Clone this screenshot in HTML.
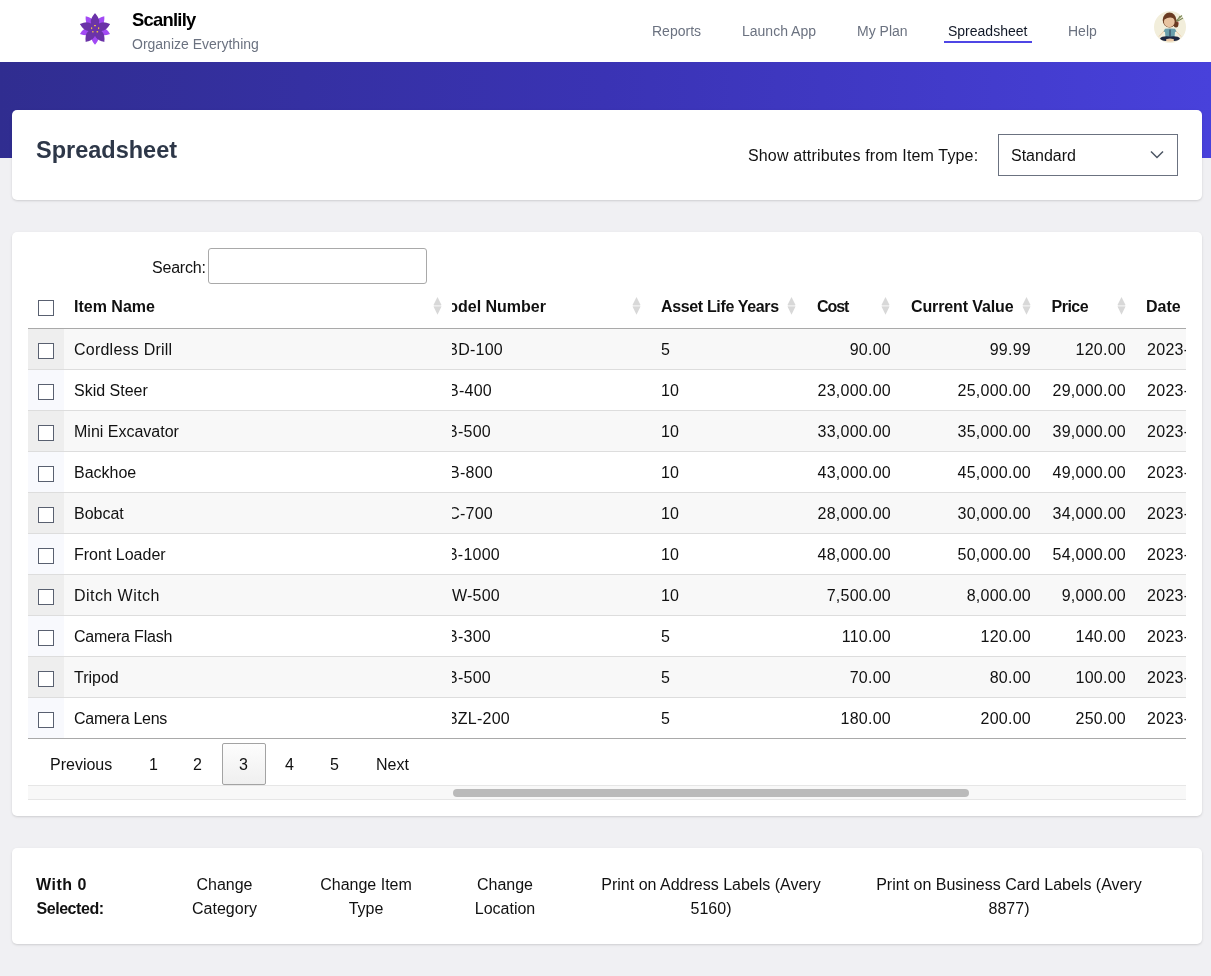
<!DOCTYPE html>
<html><head><meta charset="utf-8"><style>
*{box-sizing:border-box;margin:0;padding:0}
html,body{width:1211px;height:976px;overflow:hidden;background:#f0f0f3;font-family:"Liberation Sans",sans-serif;color:#111}
.a{position:absolute;white-space:nowrap}
.clip{position:absolute;overflow:hidden}
#hdr{position:absolute;left:0;top:0;width:1211px;height:62px;background:#fff}
#band{position:absolute;left:0;top:62px;width:1211px;height:96px;background:linear-gradient(90deg,#302d90 0%,#3a33b4 50%,#4841db 100%)}
.card{position:absolute;left:12px;width:1190px;background:#fff;border-radius:5px;box-shadow:0 1px 3px rgba(0,0,0,.10),0 1px 2px rgba(0,0,0,.06)}
.nav{font-size:14px;color:#6b7280;top:23px}
.th{font-size:16px;font-weight:700;color:#111;top:297.8px}
.cb{position:absolute;width:16px;height:16px;border:1px solid #596070;border-radius:0;background:#fff}
.td{font-size:16px;color:#111;position:absolute}
.num{letter-spacing:.25px}
</style></head><body><div id="root" style="position:absolute;left:0;top:0;width:1211px;height:976px;will-change:transform">
<div id="hdr">
<svg class="a" style="left:78px;top:12px" width="34" height="34" viewBox="78 12 34 34">
<path d="M95.00,29.00Q105.25,27.66 104.29,16.22Q93.11,18.84 95.00,29.00ZM95.00,29.00Q99.44,38.33 110.03,33.88Q104.08,24.06 95.00,29.00ZM95.00,29.00Q87.50,36.11 95.00,44.80Q102.50,36.11 95.00,29.00ZM95.00,29.00Q85.92,24.06 79.97,33.88Q90.56,38.33 95.00,29.00ZM95.00,29.00Q96.89,18.84 85.71,16.22Q84.75,27.66 95.00,29.00Z" fill="#a24af4"/>
<path d="M95.00,29.00Q103.50,21.89 95.00,13.20Q86.50,21.89 95.00,29.00ZM95.00,29.00Q104.39,34.89 110.03,24.12Q99.14,18.72 95.00,29.00ZM95.00,29.00Q92.30,39.75 104.29,41.78Q106.06,29.76 95.00,29.00ZM95.00,29.00Q83.94,29.76 85.71,41.78Q97.70,39.75 95.00,29.00ZM95.00,29.00Q90.86,18.72 79.97,24.12Q85.61,34.89 95.00,29.00Z" fill="#6b33a8"/>
<polygon points="95.00,13.20 98.82,23.74 110.03,24.12 101.18,31.01 104.29,41.78 95.00,35.50 85.71,41.78 88.82,31.01 79.97,24.12 91.18,23.74" fill="#6b33a8"/>
<g fill="#e8b64a"><rect x="94" y="25" width="2" height="1.2"/><rect x="91" y="27.3" width="1.2" height="1.8"/><rect x="98" y="27.3" width="1.2" height="1.8"/><rect x="92.2" y="31" width="1.3" height="1.5"/><rect x="96.6" y="31" width="1.5" height="1.5"/></g>
</svg>
<div class="a" style="left:132px;top:8.5px;font-size:18.4px;font-weight:700;letter-spacing:-.75px;color:#000">Scanlily</div>
<div class="a" style="left:132px;top:35.7px;font-size:14px;color:#6b7280">Organize Everything</div>
<div class="a nav" style="left:652px">Reports</div>
<div class="a nav" style="left:742px">Launch App</div>
<div class="a nav" style="left:857px">My Plan</div>
<div class="a nav" style="left:1068px">Help</div>
<div class="a nav" style="left:948px;color:#111827">Spreadsheet</div>
<div class="a" style="left:944px;top:40.5px;width:88px;height:2px;background:#4f46e5"></div>
<svg class="a" style="left:1150px;top:7px" width="40" height="40" viewBox="1150 7 40 40">
<circle cx="1170" cy="27" r="16" fill="#f2eedb"/>
<path d="M1176 21 L1182 15.5 M1176.5 22 L1180 16 M1177 21.5 L1183 18" stroke="#7d8a5a" stroke-width="1.1"/>
<circle cx="1177.5" cy="23" r="1.5" fill="#d98a8a"/>
<ellipse cx="1169.5" cy="20" rx="6.8" ry="7.4" fill="#6a3b22"/>
<ellipse cx="1176" cy="24.5" rx="2.4" ry="3" fill="#6a3b22"/>
<ellipse cx="1169.3" cy="21.8" rx="5.4" ry="5.4" fill="#e8c3a0"/>
<path d="M1164 17 Q1169 12.5 1175 17 L1174.5 18.5 Q1169 16 1164.5 19.5Z" fill="#6a3b22"/>
<path d="M1159 36.5 L1164.5 30.5 M1181 36.5 L1175.5 30.5" stroke="#edc8a4" stroke-width="1"/>
<path d="M1165 28.8 Q1170 28 1175 28.8 L1176.5 31.5 L1175 32 L1174.5 37.5 L1165.5 37.5 L1165 32 L1163.5 31.5Z" fill="#6a9eab"/>
<rect x="1169.5" y="29.5" width="1" height="7" fill="#2b3550"/>
<path d="M1160 38.5 Q1162 35.5 1170 36.5 Q1178 35.5 1180 38.5 Q1178 42 1170 40.5 Q1162 42 1160 38.5Z" fill="#1e2640"/>
<ellipse cx="1170" cy="40" rx="4" ry="1.5" fill="#ecc9a6"/>
</svg>
</div>
<div id="band"></div>
<div class="card" style="top:110px;height:90px"></div>
<div class="a" style="left:36px;top:137.3px;font-size:23.5px;font-weight:700;color:#2d3748">Spreadsheet</div>
<div class="a" style="left:748px;top:147px;font-size:16px;letter-spacing:.15px;color:#111">Show attributes from Item Type:</div>
<div class="a" style="left:998px;top:134px;width:180px;height:42px;border:1px solid #6b7280;background:#fff"></div>
<div class="a" style="left:1011px;top:147px;font-size:16px;color:#111">Standard</div>
<svg class="a" style="left:1150px;top:150px" width="14" height="10" viewBox="0 0 14 10"><path d="M1 1.5 L7 7.5 L13 1.5" stroke="#4b5563" stroke-width="1.5" fill="none"/></svg>
<div class="card" style="top:232px;height:584px"></div>
<div class="a" style="left:152px;top:259px;font-size:16px;letter-spacing:-.2px;color:#111">Search:</div>
<div class="a" style="left:208px;top:248px;width:219px;height:36px;border:1px solid #a9a9a9;border-radius:3px;background:#fff"></div>
<div class="cb" style="left:38px;top:300px"></div>
<div class="a th" style="left:74px">Item Name</div>
<svg class="a" style="left:433px;top:297px" width="9" height="18" viewBox="0 0 9 18"><rect x="0.8" y="7.9" width="7.4" height="1.7" fill="#ececec"/><path d="M4.5 0 L8.5 7.9 L0.5 7.9 Z M0.5 9.6 L8.5 9.6 L4.5 17.8 Z" fill="#d8d8d8"/></svg>
<div class="clip" style="left:452px;top:290px;width:199px;height:38px"><div class="a th" style="right:105px;top:7.8px">Model Number</div></div>
<svg class="a" style="left:632px;top:297px" width="9" height="18" viewBox="0 0 9 18"><rect x="0.8" y="7.9" width="7.4" height="1.7" fill="#ececec"/><path d="M4.5 0 L8.5 7.9 L0.5 7.9 Z M0.5 9.6 L8.5 9.6 L4.5 17.8 Z" fill="#d8d8d8"/></svg>
<div class="a th" style="left:661px;letter-spacing:-.35px">Asset Life Years</div>
<svg class="a" style="left:787px;top:297px" width="9" height="18" viewBox="0 0 9 18"><rect x="0.8" y="7.9" width="7.4" height="1.7" fill="#ececec"/><path d="M4.5 0 L8.5 7.9 L0.5 7.9 Z M0.5 9.6 L8.5 9.6 L4.5 17.8 Z" fill="#d8d8d8"/></svg>
<div class="a th" style="left:817px;letter-spacing:-1.1px">Cost</div>
<svg class="a" style="left:881px;top:297px" width="9" height="18" viewBox="0 0 9 18"><rect x="0.8" y="7.9" width="7.4" height="1.7" fill="#ececec"/><path d="M4.5 0 L8.5 7.9 L0.5 7.9 Z M0.5 9.6 L8.5 9.6 L4.5 17.8 Z" fill="#d8d8d8"/></svg>
<div class="a th" style="left:911px;letter-spacing:-.12px">Current Value</div>
<svg class="a" style="left:1022px;top:297px" width="9" height="18" viewBox="0 0 9 18"><rect x="0.8" y="7.9" width="7.4" height="1.7" fill="#ececec"/><path d="M4.5 0 L8.5 7.9 L0.5 7.9 Z M0.5 9.6 L8.5 9.6 L4.5 17.8 Z" fill="#d8d8d8"/></svg>
<div class="a th" style="left:1051.5px;letter-spacing:-.5px">Price</div>
<svg class="a" style="left:1117px;top:297px" width="9" height="18" viewBox="0 0 9 18"><rect x="0.8" y="7.9" width="7.4" height="1.7" fill="#ececec"/><path d="M4.5 0 L8.5 7.9 L0.5 7.9 Z M0.5 9.6 L8.5 9.6 L4.5 17.8 Z" fill="#d8d8d8"/></svg>
<div class="clip" style="left:1136px;top:290px;width:50px;height:38px"><div class="a th" style="left:10px;top:7.8px">Date</div></div>
<div class="a" style="left:28px;top:328px;width:1158px;height:1px;background:#a9a9a9"></div>
<div class="a" style="left:28px;top:329px;width:1158px;height:40px;background:#f8f8f8"></div>
<div class="a" style="left:28px;top:329px;width:36px;height:40px;background:#eeeeee"></div>
<div class="a" style="left:28px;top:369px;width:1158px;height:1px;background:#dddddd"></div>
<div class="cb" style="left:38px;top:343px"></div>
<div class="a td" style="left:74px;top:341px;letter-spacing:0.23px">Cordless Drill</div>
<div class="clip" style="left:452px;top:329px;width:52px;height:40px"><div class="a td num" style="right:1px;top:12px">BD-100</div></div>
<div class="a td" style="left:661px;top:341px">5</div>
<div class="a td num" style="right:320px;top:341px">90.00</div>
<div class="a td num" style="right:180px;top:341px">99.99</div>
<div class="a td num" style="right:85px;top:341px">120.00</div>
<div class="clip" style="left:1136px;top:329px;width:50px;height:40px"><div class="a td" style="left:11px;top:12px;letter-spacing:.3px">2023-05-01</div></div>
<div class="a" style="left:28px;top:370px;width:1158px;height:40px;background:#ffffff"></div>
<div class="a" style="left:28px;top:370px;width:36px;height:40px;background:#f8f9fd"></div>
<div class="a" style="left:28px;top:410px;width:1158px;height:1px;background:#dddddd"></div>
<div class="cb" style="left:38px;top:384px"></div>
<div class="a td" style="left:74px;top:382px;letter-spacing:0px">Skid Steer</div>
<div class="clip" style="left:452px;top:370px;width:41px;height:40px"><div class="a td num" style="right:1px;top:12px">B-400</div></div>
<div class="a td" style="left:661px;top:382px">10</div>
<div class="a td num" style="right:320px;top:382px">23,000.00</div>
<div class="a td num" style="right:180px;top:382px">25,000.00</div>
<div class="a td num" style="right:85px;top:382px">29,000.00</div>
<div class="clip" style="left:1136px;top:370px;width:50px;height:40px"><div class="a td" style="left:11px;top:12px;letter-spacing:.3px">2023-05-01</div></div>
<div class="a" style="left:28px;top:411px;width:1158px;height:40px;background:#f8f8f8"></div>
<div class="a" style="left:28px;top:411px;width:36px;height:40px;background:#eeeeee"></div>
<div class="a" style="left:28px;top:451px;width:1158px;height:1px;background:#dddddd"></div>
<div class="cb" style="left:38px;top:425px"></div>
<div class="a td" style="left:74px;top:423px;letter-spacing:0px">Mini Excavator</div>
<div class="clip" style="left:452px;top:411px;width:40px;height:40px"><div class="a td num" style="right:1px;top:12px">B-500</div></div>
<div class="a td" style="left:661px;top:423px">10</div>
<div class="a td num" style="right:320px;top:423px">33,000.00</div>
<div class="a td num" style="right:180px;top:423px">35,000.00</div>
<div class="a td num" style="right:85px;top:423px">39,000.00</div>
<div class="clip" style="left:1136px;top:411px;width:50px;height:40px"><div class="a td" style="left:11px;top:12px;letter-spacing:.3px">2023-05-01</div></div>
<div class="a" style="left:28px;top:452px;width:1158px;height:40px;background:#ffffff"></div>
<div class="a" style="left:28px;top:452px;width:36px;height:40px;background:#f8f9fd"></div>
<div class="a" style="left:28px;top:492px;width:1158px;height:1px;background:#dddddd"></div>
<div class="cb" style="left:38px;top:466px"></div>
<div class="a td" style="left:74px;top:464px;letter-spacing:0px">Backhoe</div>
<div class="clip" style="left:452px;top:452px;width:42px;height:40px"><div class="a td num" style="right:1px;top:12px">B-800</div></div>
<div class="a td" style="left:661px;top:464px">10</div>
<div class="a td num" style="right:320px;top:464px">43,000.00</div>
<div class="a td num" style="right:180px;top:464px">45,000.00</div>
<div class="a td num" style="right:85px;top:464px">49,000.00</div>
<div class="clip" style="left:1136px;top:452px;width:50px;height:40px"><div class="a td" style="left:11px;top:12px;letter-spacing:.3px">2023-05-01</div></div>
<div class="a" style="left:28px;top:493px;width:1158px;height:40px;background:#f8f8f8"></div>
<div class="a" style="left:28px;top:493px;width:36px;height:40px;background:#eeeeee"></div>
<div class="a" style="left:28px;top:533px;width:1158px;height:1px;background:#dddddd"></div>
<div class="cb" style="left:38px;top:507px"></div>
<div class="a td" style="left:74px;top:505px;letter-spacing:0px">Bobcat</div>
<div class="clip" style="left:452px;top:493px;width:42px;height:40px"><div class="a td num" style="right:1px;top:12px">C-700</div></div>
<div class="a td" style="left:661px;top:505px">10</div>
<div class="a td num" style="right:320px;top:505px">28,000.00</div>
<div class="a td num" style="right:180px;top:505px">30,000.00</div>
<div class="a td num" style="right:85px;top:505px">34,000.00</div>
<div class="clip" style="left:1136px;top:493px;width:50px;height:40px"><div class="a td" style="left:11px;top:12px;letter-spacing:.3px">2023-05-01</div></div>
<div class="a" style="left:28px;top:534px;width:1158px;height:40px;background:#ffffff"></div>
<div class="a" style="left:28px;top:534px;width:36px;height:40px;background:#f8f9fd"></div>
<div class="a" style="left:28px;top:574px;width:1158px;height:1px;background:#dddddd"></div>
<div class="cb" style="left:38px;top:548px"></div>
<div class="a td" style="left:74px;top:546px;letter-spacing:0px">Front Loader</div>
<div class="clip" style="left:452px;top:534px;width:49px;height:40px"><div class="a td num" style="right:1px;top:12px">B-1000</div></div>
<div class="a td" style="left:661px;top:546px">10</div>
<div class="a td num" style="right:320px;top:546px">48,000.00</div>
<div class="a td num" style="right:180px;top:546px">50,000.00</div>
<div class="a td num" style="right:85px;top:546px">54,000.00</div>
<div class="clip" style="left:1136px;top:534px;width:50px;height:40px"><div class="a td" style="left:11px;top:12px;letter-spacing:.3px">2023-05-01</div></div>
<div class="a" style="left:28px;top:575px;width:1158px;height:40px;background:#f8f8f8"></div>
<div class="a" style="left:28px;top:575px;width:36px;height:40px;background:#eeeeee"></div>
<div class="a" style="left:28px;top:615px;width:1158px;height:1px;background:#dddddd"></div>
<div class="cb" style="left:38px;top:589px"></div>
<div class="a td" style="left:74px;top:587px;letter-spacing:0.45px">Ditch Witch</div>
<div class="clip" style="left:452px;top:575px;width:49px;height:40px"><div class="a td num" style="right:1px;top:12px">W-500</div></div>
<div class="a td" style="left:661px;top:587px">10</div>
<div class="a td num" style="right:320px;top:587px">7,500.00</div>
<div class="a td num" style="right:180px;top:587px">8,000.00</div>
<div class="a td num" style="right:85px;top:587px">9,000.00</div>
<div class="clip" style="left:1136px;top:575px;width:50px;height:40px"><div class="a td" style="left:11px;top:12px;letter-spacing:.3px">2023-05-01</div></div>
<div class="a" style="left:28px;top:616px;width:1158px;height:40px;background:#ffffff"></div>
<div class="a" style="left:28px;top:616px;width:36px;height:40px;background:#f8f9fd"></div>
<div class="a" style="left:28px;top:656px;width:1158px;height:1px;background:#dddddd"></div>
<div class="cb" style="left:38px;top:630px"></div>
<div class="a td" style="left:74px;top:628px;letter-spacing:-0.18px">Camera Flash</div>
<div class="clip" style="left:452px;top:616px;width:40px;height:40px"><div class="a td num" style="right:1px;top:12px">B-300</div></div>
<div class="a td" style="left:661px;top:628px">5</div>
<div class="a td num" style="right:320px;top:628px">110.00</div>
<div class="a td num" style="right:180px;top:628px">120.00</div>
<div class="a td num" style="right:85px;top:628px">140.00</div>
<div class="clip" style="left:1136px;top:616px;width:50px;height:40px"><div class="a td" style="left:11px;top:12px;letter-spacing:.3px">2023-05-01</div></div>
<div class="a" style="left:28px;top:657px;width:1158px;height:40px;background:#f8f8f8"></div>
<div class="a" style="left:28px;top:657px;width:36px;height:40px;background:#eeeeee"></div>
<div class="a" style="left:28px;top:697px;width:1158px;height:1px;background:#dddddd"></div>
<div class="cb" style="left:38px;top:671px"></div>
<div class="a td" style="left:74px;top:669px;letter-spacing:0px">Tripod</div>
<div class="clip" style="left:452px;top:657px;width:40px;height:40px"><div class="a td num" style="right:1px;top:12px">B-500</div></div>
<div class="a td" style="left:661px;top:669px">5</div>
<div class="a td num" style="right:320px;top:669px">70.00</div>
<div class="a td num" style="right:180px;top:669px">80.00</div>
<div class="a td num" style="right:85px;top:669px">100.00</div>
<div class="clip" style="left:1136px;top:657px;width:50px;height:40px"><div class="a td" style="left:11px;top:12px;letter-spacing:.3px">2023-05-01</div></div>
<div class="a" style="left:28px;top:698px;width:1158px;height:40px;background:#ffffff"></div>
<div class="a" style="left:28px;top:698px;width:36px;height:40px;background:#f8f9fd"></div>
<div class="a" style="left:28px;top:738px;width:1158px;height:1px;background:#a9a9a9"></div>
<div class="cb" style="left:38px;top:712px"></div>
<div class="a td" style="left:74px;top:710px;letter-spacing:-0.27px">Camera Lens</div>
<div class="clip" style="left:452px;top:698px;width:59px;height:40px"><div class="a td num" style="right:1px;top:12px">BZL-200</div></div>
<div class="a td" style="left:661px;top:710px">5</div>
<div class="a td num" style="right:320px;top:710px">180.00</div>
<div class="a td num" style="right:180px;top:710px">200.00</div>
<div class="a td num" style="right:85px;top:710px">250.00</div>
<div class="clip" style="left:1136px;top:698px;width:50px;height:40px"><div class="a td" style="left:11px;top:12px;letter-spacing:.3px">2023-05-01</div></div>
<div class="a" style="left:222px;top:743px;width:44px;height:42px;border:1px solid #a3a3a3;border-radius:2px;background:linear-gradient(#fdfdfd 0%,#efefef 100%)"></div>
<div class="a" style="left:50px;top:755.7px;font-size:16px;color:#111">Previous</div>
<div class="a" style="left:149px;top:755.7px;font-size:16px;color:#111">1</div>
<div class="a" style="left:193px;top:755.7px;font-size:16px;color:#111">2</div>
<div class="a" style="left:239px;top:755.7px;font-size:16px;color:#111">3</div>
<div class="a" style="left:285px;top:755.7px;font-size:16px;color:#111">4</div>
<div class="a" style="left:330px;top:755.7px;font-size:16px;color:#111">5</div>
<div class="a" style="left:376px;top:755.7px;font-size:16px;color:#111">Next</div>
<div class="a" style="left:28px;top:785px;width:1158px;height:15px;background:#f8f8f8;border-top:1px solid #e6e6e6;border-bottom:1px solid #e6e6e6"></div>
<div class="a" style="left:453px;top:789px;width:516px;height:8px;border-radius:4px;background:#bababa"></div>
<div class="card" style="top:848px;height:96px"></div>
<div class="a" style="left:36px;top:872.8px;font-size:16px;font-weight:700;letter-spacing:.5px;line-height:24px;color:#111">With 0</div><div class="a" style="left:36.5px;top:896.8px;font-size:16px;font-weight:700;letter-spacing:-.45px;line-height:24px;color:#111">Selected:</div>
<div class="a" style="left:24.5px;top:872.8px;width:400px;font-size:16px;color:#111;line-height:24px;text-align:center">Change<br>Category</div>
<div class="a" style="left:166px;top:872.8px;width:400px;font-size:16px;color:#111;line-height:24px;text-align:center">Change Item<br>Type</div>
<div class="a" style="left:305px;top:872.8px;width:400px;font-size:16px;color:#111;line-height:24px;text-align:center">Change<br>Location</div>
<div class="a" style="left:511px;top:872.8px;width:400px;font-size:16px;color:#111;line-height:24px;text-align:center">Print on Address Labels (Avery<br>5160)</div>
<div class="a" style="left:809px;top:872.8px;width:400px;font-size:16px;color:#111;line-height:24px;text-align:center">Print on Business Card Labels (Avery<br>8877)</div>
</div></body></html>
